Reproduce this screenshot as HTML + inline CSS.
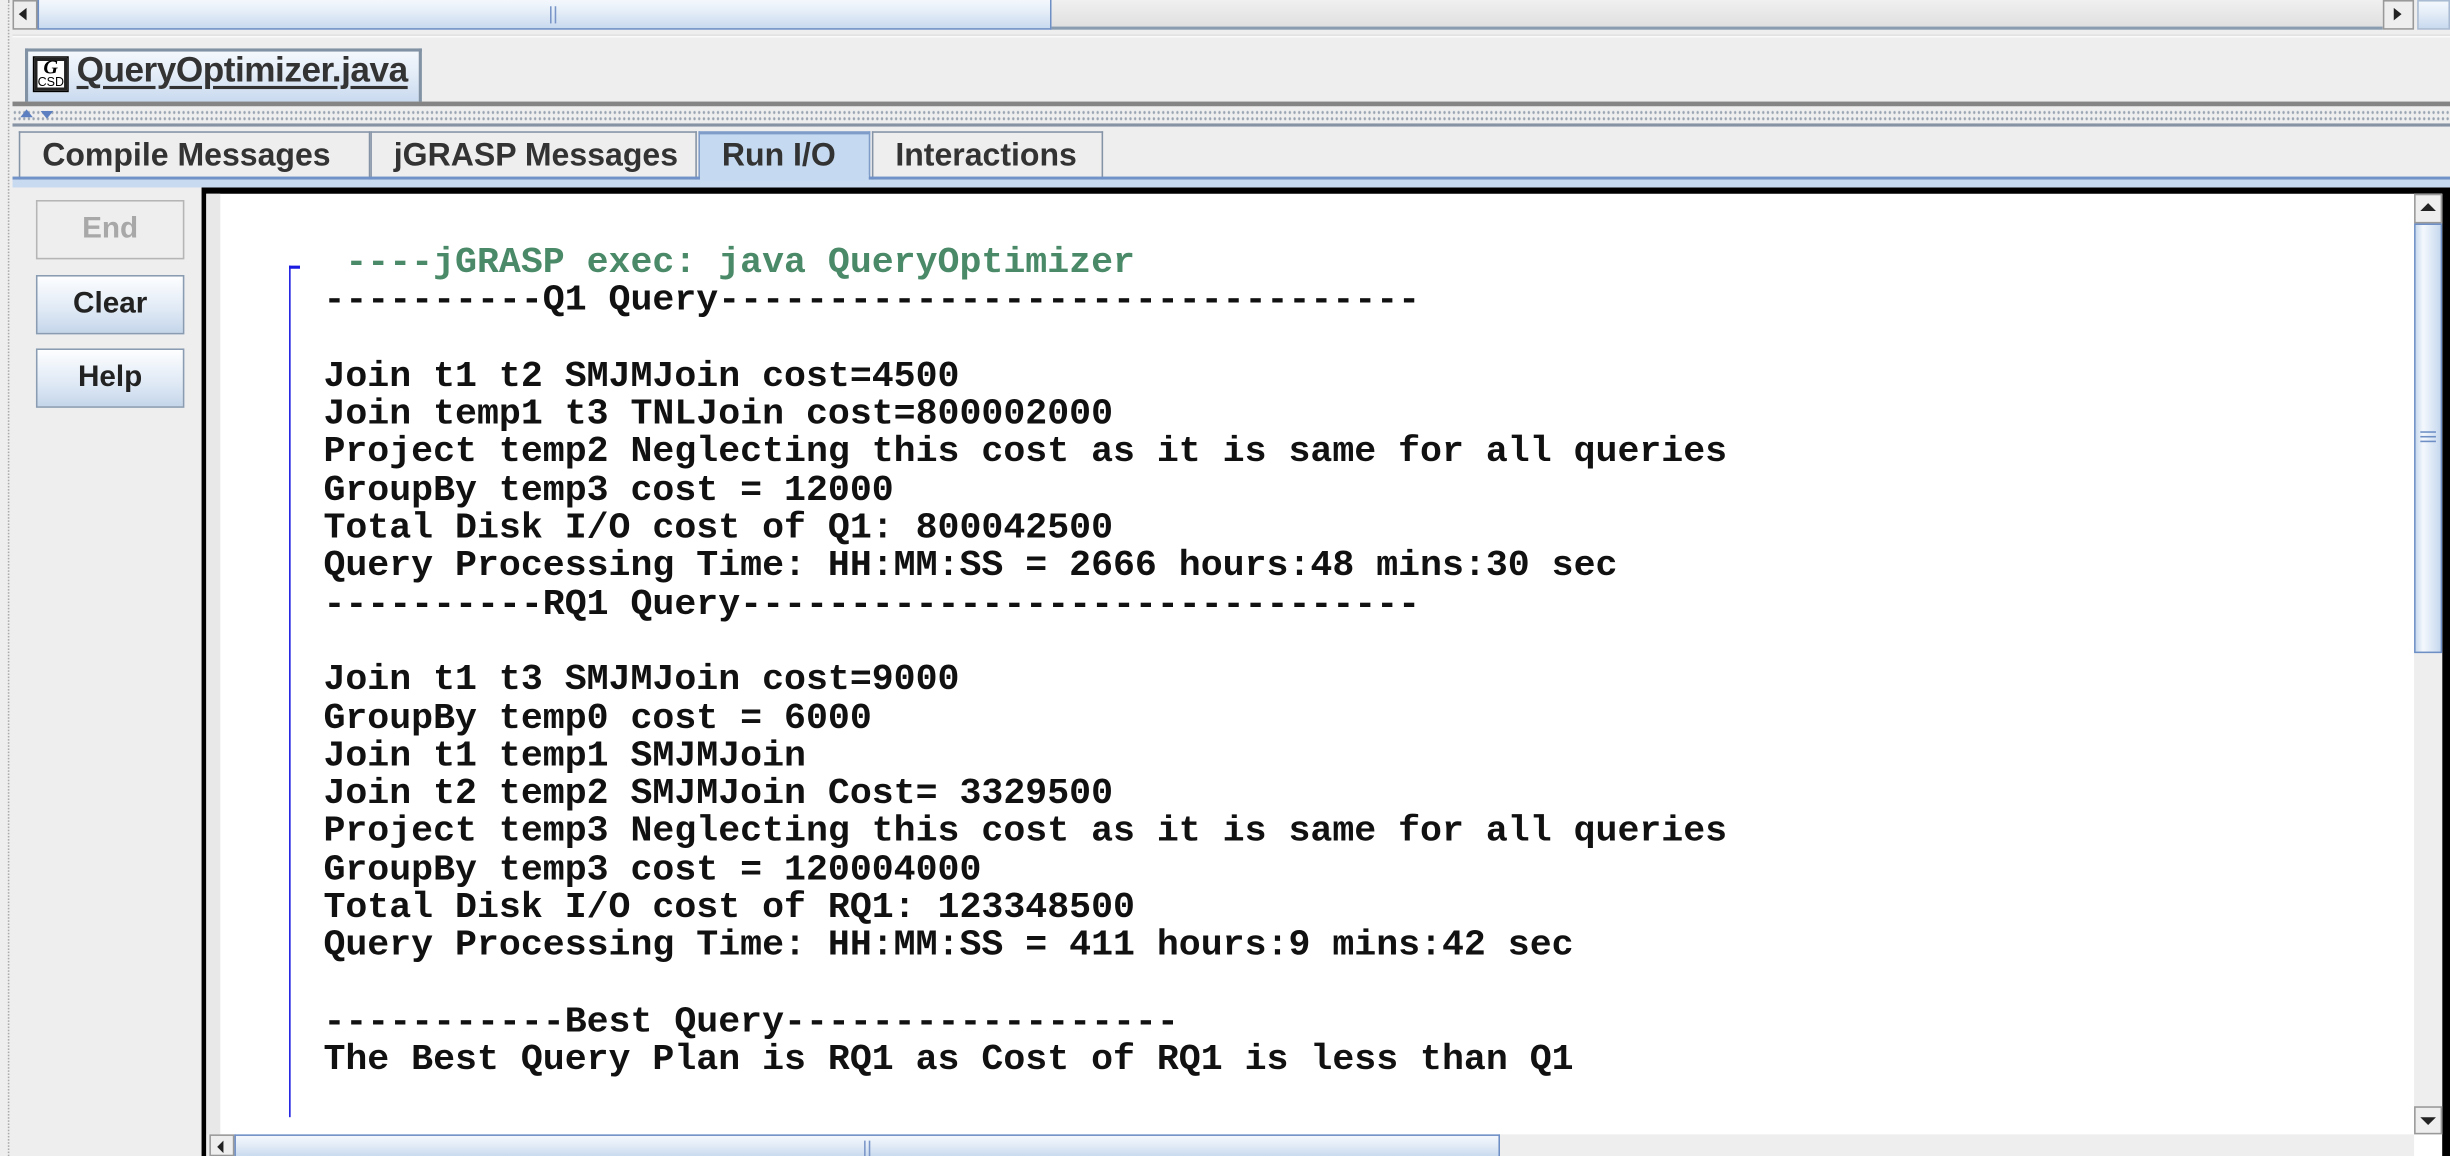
<!DOCTYPE html>
<html><head><meta charset="utf-8"><style>
body{margin:0;width:2450px;height:1156px;overflow:hidden;background:#eee}
#w{position:absolute;left:0;top:0;width:1568px;height:740px;transform:scale(1.5625);transform-origin:0 0;background:#eeeeee;font-family:"Liberation Sans",sans-serif}
.a{position:absolute;box-sizing:border-box}
.grad{background:linear-gradient(#f4f8fd,#e3ecf7 45%,#c9daef)}
.tab{position:absolute;box-sizing:border-box;top:84px;height:31px;border:1px solid #8493a6;border-bottom:none;font-weight:bold;font-size:20.5px;color:#333;padding-left:14px;line-height:30px;background:#eee;white-space:nowrap}
.btn{position:absolute;box-sizing:border-box;left:23px;width:95px;height:38px;border:1px solid #8a9cb2;font-weight:bold;font-size:19px;color:#222;text-align:center;line-height:36px;background:linear-gradient(#fdfeff,#dfe9f5 60%,#c5d6ea)}
pre{margin:0;font-family:"Liberation Mono",monospace;font-weight:bold;font-size:23.4px;line-height:24.3px;color:#111}
</style></head><body><div id="w">
<div class="a" style="left:0;top:0;width:6px;height:740px;border-right:1px dotted #aaa"></div>
<div class="a" style="left:8px;top:0;width:16px;height:19px;border:1px solid #999;background:#eee"></div>
<div class="a" style="left:12px;top:5px;width:0;height:0;border-top:4px solid transparent;border-bottom:4px solid transparent;border-right:5px solid #222"></div>
<div class="a grad" style="left:24px;top:0;width:649px;height:19px;border:1px solid #6e8fc5;border-top:none"></div>
<div class="a" style="left:352px;top:4px;width:4px;height:11px;border-left:1px solid #7a96c8;border-right:1px solid #7a96c8"></div>
<div class="a" style="left:673px;top:0;width:852px;height:19px;border-bottom:2px solid #8a9cb0;background:linear-gradient(#f0f0f0,#e0e0e0)"></div>
<div class="a" style="left:1525px;top:0;width:20px;height:19px;border:1px solid #999;background:#eee"></div>
<div class="a" style="left:1532px;top:5px;width:0;height:0;border-top:4px solid transparent;border-bottom:4px solid transparent;border-left:5px solid #222"></div>
<div class="a grad" style="left:1547px;top:0;width:21px;height:19px;border:1px solid #a9bbd3"></div>
<div class="a" style="left:8px;top:22px;width:1560px;height:2px;background:#fafafa;border-top:1px solid #e0e0e0"></div>
<div class="a grad" style="left:16px;top:31px;width:254px;height:34px;border:2px solid #8192a4;border-bottom:none"></div>
<div class="a" style="left:21px;top:36px;width:23px;height:23px;border:1px solid #000;background:#fff;box-shadow:0 0 0 2px #222 inset"></div>
<div class="a" style="left:21px;top:35px;width:23px;text-align:center;font:italic bold 13px 'Liberation Serif',serif;color:#000">G</div>
<div class="a" style="left:21px;top:48px;width:23px;text-align:center;font:8px 'Liberation Sans',sans-serif;color:#000">CSD</div>
<div class="a" style="left:49px;top:32px;font-weight:bold;font-size:22.5px;color:#333;text-decoration:underline;text-decoration-thickness:2px;text-underline-offset:3px;letter-spacing:-0.3px">QueryOptimizer.java</div>
<div class="a" style="left:8px;top:65px;width:1560px;height:3px;background:#858585"></div>
<div class="a" style="left:8px;top:70px;width:1560px;height:8px;background-image:radial-gradient(#9aa5b3 0.6px,transparent 0.9px);background-size:3px 4px"></div>
<div class="a" style="left:13px;top:70px;width:0;height:0;border-left:4px solid transparent;border-right:4px solid transparent;border-bottom:5px solid #5b7fc0"></div>
<div class="a" style="left:26px;top:71px;width:0;height:0;border-left:4px solid transparent;border-right:4px solid transparent;border-top:5px solid #5b7fc0"></div>
<div class="a" style="left:8px;top:79px;width:1560px;height:2px;background:#8593a4"></div>
<div class="tab" style="left:12px;width:225px">Compile Messages</div>
<div class="tab" style="left:237px;width:209px">jGRASP Messages</div>
<div class="tab" style="left:447px;width:110px;background:#c5d9f0;border-color:#7f9cc9;border-top:2px solid #7f9cc9;line-height:28px">Run I/O</div>
<div class="tab" style="left:558px;width:148px">Interactions</div>
<div class="a" style="left:8px;top:113px;width:1560px;height:2px;background:#7092c8"></div>
<div class="a" style="left:8px;top:115px;width:1560px;height:5px;background:#c8daf0"></div>
<div class="a" style="left:448px;top:112px;width:108px;height:4px;background:#c5d9f0"></div>
<div class="btn" style="top:128px;background:#eee;border-color:#b5b5b5;color:#a8a8a8">End</div>
<div class="btn" style="top:176px">Clear</div>
<div class="btn" style="top:223px">Help</div>
<div class="a" style="left:129px;top:120px;width:1439px;height:620px;background:#000"></div>
<div class="a" style="left:132px;top:124px;width:1431px;height:616px;background:#fff"></div>
<div class="a" style="left:132px;top:124px;width:9px;height:602px;background:#e8e8e8"></div>
<div class="a" style="left:185px;top:170px;width:1px;height:545px;background:#1a1ae0"></div>
<div class="a" style="left:185px;top:170px;width:7px;height:2px;background:#1a1ae0"></div>
<pre class="a" style="left:207px;top:157px"><span style="color:#4a8a68"> ----jGRASP exec: java QueryOptimizer</span>
----------Q1 Query--------------------------------

Join t1 t2 SMJMJoin cost=4500
Join temp1 t3 TNLJoin cost=800002000
Project temp2 Neglecting this cost as it is same for all queries
GroupBy temp3 cost = 12000
Total Disk I/O cost of Q1: 800042500
Query Processing Time: HH:MM:SS = 2666 hours:48 mins:30 sec
----------RQ1 Query-------------------------------

Join t1 t3 SMJMJoin cost=9000
GroupBy temp0 cost = 6000
Join t1 temp1 SMJMJoin
Join t2 temp2 SMJMJoin Cost= 3329500
Project temp3 Neglecting this cost as it is same for all queries
GroupBy temp3 cost = 120004000
Total Disk I/O cost of RQ1: 123348500
Query Processing Time: HH:MM:SS = 411 hours:9 mins:42 sec

-----------Best Query------------------
The Best Query Plan is RQ1 as Cost of RQ1 is less than Q1</pre>
<div class="a" style="left:1545px;top:124px;width:18px;height:602px;background:#eee"></div>
<div class="a" style="left:1545px;top:124px;width:18px;height:19px;border:1px solid #999;background:#eee"></div>
<div class="a" style="left:1549px;top:130px;width:0;height:0;border-left:5px solid transparent;border-right:5px solid transparent;border-bottom:5px solid #222"></div>
<div class="a" style="left:1545px;top:143px;width:18px;height:275px;border:1px solid #6e8fc5;background:linear-gradient(90deg,#c9daef,#f4f8fd 30%,#c6d8ee)"></div>
<div class="a" style="left:1549px;top:276px;width:10px;height:7px;border-top:1px solid #6e8fc5;border-bottom:1px solid #6e8fc5"></div>
<div class="a" style="left:1549px;top:279px;width:10px;height:1px;background:#6e8fc5"></div>
<div class="a" style="left:1545px;top:708px;width:18px;height:18px;border:1px solid #999;background:#eee"></div>
<div class="a" style="left:1549px;top:715px;width:0;height:0;border-left:5px solid transparent;border-right:5px solid transparent;border-top:5px solid #222"></div>
<div class="a" style="left:132px;top:726px;width:1413px;height:14px;background:#eee"></div>
<div class="a" style="left:134px;top:726px;width:16px;height:14px;border:1px solid #999;background:#eee"></div>
<div class="a" style="left:139px;top:730px;width:0;height:0;border-top:4px solid transparent;border-bottom:4px solid transparent;border-right:4px solid #222"></div>
<div class="a grad" style="left:150px;top:726px;width:810px;height:14px;border:1px solid #6e8fc5;border-bottom:none"></div>
<div class="a" style="left:553px;top:730px;width:4px;height:10px;border-left:1px solid #7a96c8;border-right:1px solid #7a96c8"></div>
</div></body></html>
